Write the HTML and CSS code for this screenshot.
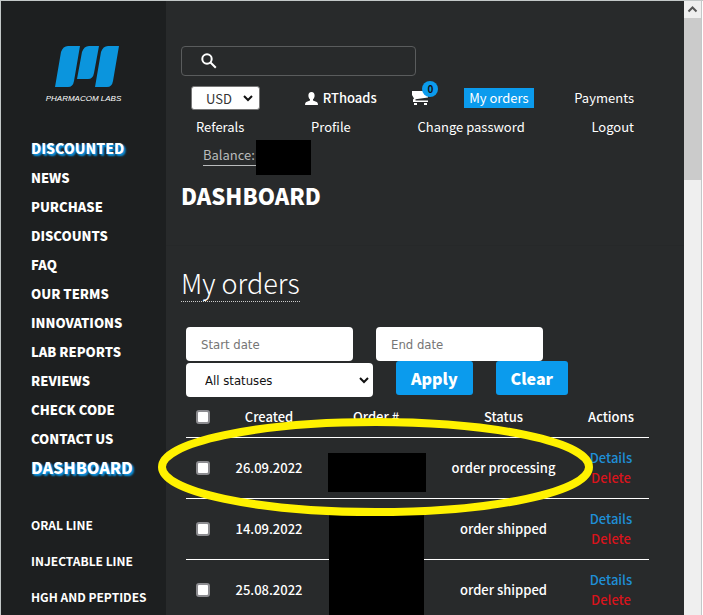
FILE: index.html
```html
<!DOCTYPE html>
<html lang="en">
<head>
  <meta charset="UTF-8">
  <meta name="viewport" content="width=device-width, initial-scale=1.0">
  <title>Dashboard - My orders</title>
  <link rel="stylesheet" href="styles.css">
</head>
<body>

<div class="window">
  <aside class="sidebar">
    <a class="logo" href="#">
      <svg width="64" height="42" viewBox="0 0 64 42" aria-hidden="true">
        <path d="M13 0H25L19 35Q18 41 13 41H0L6 6Q8 0 13 0Z"/>
        <path d="M34 0H44L39 27Q38 33 33 33H22L27 6Q29 0 34 0Z"/>
        <path d="M53 0H64L58 35Q57 41 52 41H40L46 6Q48 0 53 0Z"/>
      </svg>
      <span>PHARMACOM LABS</span>
    </a>
    <nav class="menu">
      <a class="glow" href="#">Discounted</a>
      <a href="#">News</a>
      <a href="#">Purchase</a>
      <a href="#">Discounts</a>
      <a href="#">FAQ</a>
      <a href="#">Our terms</a>
      <a href="#">Innovations</a>
      <a href="#">Lab reports</a>
      <a href="#">Reviews</a>
      <a href="#">Check code</a>
      <a href="#">Contact us</a>
      <a class="glow current" href="#">Dashboard</a>
    </nav>
    <nav class="lines">
      <a href="#">Oral line</a>
      <a href="#">Injectable line</a>
      <a href="#">HGH and peptides</a>
    </nav>
  </aside>

  <main class="content">
    <header class="top">
      <form class="search">
        <svg width="16" height="16" viewBox="0 0 16 16" aria-hidden="true">
          <circle cx="6" cy="6" r="4.7"/>
          <path d="M9.5 9.5L14.8 14.8"/>
        </svg>
        <input type="text" aria-label="Search">
      </form>

      <div class="user-row">
        <div class="currency">
          <select aria-label="Currency"><option>USD</option></select>
          <svg width="10" height="7" viewBox="0 0 10 7" aria-hidden="true"><path d="M1 1L5 5L9 1"/></svg>
        </div>
        <a class="user" href="#">
          <svg width="13" height="13" viewBox="0 0 13 13" aria-hidden="true">
            <path d="M6.500 0C8.600 0 9.600 1.500 9.600 3.500C9.600 5.200 8.900 6.600 8 7.300V8.500L11.800 10Q13 10.600 13 13H0Q0 10.600 1.200 10L5 8.500V7.300C4.100 6.600 3.400 5.200 3.400 3.500C3.400 1.500 4.400 0 6.500 0Z"/>
          </svg>
          RThoads
        </a>
        <a class="cart" href="#" aria-label="Cart">
          <svg width="18" height="16" viewBox="0 0 18 16" aria-hidden="true">
            <path d="M0 1H16V7.500L3.500 9.200V10.500H16V12H1V9.500L2 8.500L0 5Z"/>
            <rect x="2" y="13" width="3" height="2"/>
            <rect x="12" y="13" width="3" height="2"/>
          </svg>
          <span class="badge">0</span>
        </a>
        <a class="active" href="#">My orders</a>
        <a href="#">Payments</a>
      </div>
      <div class="user-row links">
        <a href="#">Referals</a>
        <a href="#">Profile</a>
        <a href="#">Change password</a>
        <a href="#">Logout</a>
      </div>
      <div class="balance">
        <span>Balance:</span>
        <div class="redacted amount"></div>
      </div>
      <h1>Dashboard</h1>
    </header>

    <section class="orders">
      <h2>My orders</h2>

      <form class="filters">
        <div class="dates">
          <input type="text" placeholder="Start date" aria-label="Start date">
          <input type="text" placeholder="End date" aria-label="End date">
        </div>
        <div class="actions">
          <div class="status">
            <select aria-label="Status"><option>All statuses</option></select>
            <svg width="10" height="7" viewBox="0 0 10 7" aria-hidden="true"><path d="M1 1L5 5L9 1"/></svg>
          </div>
          <button type="button">Apply</button>
          <button type="button">Clear</button>
        </div>
      </form>

      <div class="table-wrap">
        <table>
          <thead>
            <tr>
              <th class="col-check"><input type="checkbox" aria-label="Select all"></th>
              <th class="col-created">Created</th>
              <th class="col-order">Order #</th>
              <th class="col-status">Status</th>
              <th>Actions</th>
            </tr>
          </thead>
          <tbody>
            <tr>
              <td><input type="checkbox" aria-label="Select order of 26.09.2022"></td>
              <td>26.09.2022</td>
              <td><div class="redacted number"></div></td>
              <td>order processing</td>
              <td><a class="details" href="#">Details</a><a class="delete" href="#">Delete</a></td>
            </tr>
            <tr>
              <td><input type="checkbox" aria-label="Select order of 14.09.2022"></td>
              <td>14.09.2022</td>
              <td class="covered"><div class="redacted numbers"></div></td>
              <td>order shipped</td>
              <td><a class="details" href="#">Details</a><a class="delete" href="#">Delete</a></td>
            </tr>
            <tr>
              <td><input type="checkbox" aria-label="Select order of 25.08.2022"></td>
              <td>25.08.2022</td>
              <td></td>
              <td>order shipped</td>
              <td><a class="details" href="#">Details</a><a class="delete" href="#">Delete</a></td>
            </tr>
          </tbody>
        </table>
        <svg class="marker" viewBox="0 0 436 98" preserveAspectRatio="none" aria-hidden="true">
          <ellipse cx="218" cy="49" rx="214" ry="45"/>
        </svg>
      </div>
    </section>
  </main>

  <div class="scrollbar">
    <svg width="17" height="17" viewBox="0 0 17 17" aria-hidden="true"><path d="M4.500 10.500L8.500 6.500L12.500 10.500"/></svg>
    <div class="thumb"></div>
  </div>
</div>

</body>
</html>
```
FILE: styles.css
```css
* {
  box-sizing: border-box;
}
body {
  margin: 0;
  font-family: "Noto Sans CJK SC", "Open Sans", sans-serif;
  font-size: 13px;
  line-height: 20px;
  color: #fff;
  background-color: #282a2b;
}
a {
  color: inherit;
  text-decoration: none;
}
h1, h2 {
  margin: 0;
}
.window {
  display: flex;
  height: 100vh;
  overflow: hidden;
  border-top: 1px solid #c3c8c8;
  border-left: 1px solid #c3c8c8;
}

/* sidebar */
.sidebar {
  flex: 0 0 165px;
  padding-top: 45px;
  background-color: #1d1f20;
  font-weight: 900;
  text-transform: uppercase;
}
.logo {
  display: flex;
  flex-direction: column;
  align-items: center;
  gap: 5px;
  font: italic 8px/12px "Liberation Sans", Arial, sans-serif;
}
.logo svg {
  margin-left: 6px;
  fill: #0b95dd;
}
.menu, .lines {
  display: flex;
  flex-direction: column;
  padding-left: 30px;
}
.menu {
  margin-top: 29px;
  line-height: 29px;
}
.lines {
  margin-top: 25px;
  line-height: 36px;
  font-size: 12px;
  font-weight: 700;
}
.glow {
  font-size: 14px;
  text-shadow: 1px 1px 2px #0b9bed, 2px 2px 2px #0b84c9;
}
.menu .current {
  font-size: 16px;
}

/* header */
.content {
  flex: 1;
  min-width: 0;
}
.top {
  padding: 45px 45px 34px 15px;
  border-bottom: 1px solid #262829;
}
.search {
  display: flex;
  align-items: center;
  width: 235px;
  height: 30px;
  padding-left: 19px;
  border: 1px solid #5a5c5d;
  border-radius: 4px;
}
.search svg {
  fill: none;
  stroke: #fff;
  stroke-width: 2;
}
.search input {
  flex: 1;
  min-width: 0;
  border: none;
  outline: none;
  color: #fff;
  background: none;
}
.user-row {
  display: flex;
  justify-content: space-between;
  align-items: center;
  height: 24px;
  margin-top: 10px;
  padding-left: 10px;
}
.user-row > a {
  padding: 0 5px;
}
.user-row.links {
  margin-top: 5px;
}
.currency, .status {
  position: relative;
}
.currency svg, .status svg {
  position: absolute;
  top: 9px;
  right: 7px;
  fill: none;
  stroke: #111;
  stroke-width: 2;
  pointer-events: none;
}
.currency select {
  display: block;
  width: 69px;
  height: 24px;
  padding: 0 14px;
  appearance: none;
  border: 1px solid #777;
  border-radius: 3px;
  font-family: inherit;
  font-size: 13px;
  color: #333;
  background-color: #fff;
}
.user-row .user {
  display: flex;
  align-items: center;
  gap: 5px;
  padding: 0 0 0 9px;
  font-weight: 500;
}
.user svg, .cart svg {
  fill: #fff;
}
.user-row .cart {
  position: relative;
  width: 16px;
  height: 16px;
  padding: 0;
}
.cart svg {
  display: block;
}
.badge {
  position: absolute;
  left: 10px;
  bottom: 9px;
  width: 16px;
  height: 16px;
  border-radius: 50%;
  background-color: #0b9bed;
  font-size: 10px;
  font-weight: 700;
  line-height: 16px;
  text-align: center;
  color: #111;
}
.active {
  background-color: #0b9bed;
}
.balance {
  display: flex;
  height: 35px;
  margin-top: 1px;
  padding-left: 22px;
  color: #b9bbbc;
}
.balance span {
  align-self: flex-start;
  width: 53px;
  margin-top: 5px;
  border-bottom: 1px solid #b9bbbc;
}
.redacted {
  background-color: #000;
}
.amount {
  width: 55px;
}
h1 {
  margin-top: 4px;
  font-size: 22px;
  font-weight: 900;
  line-height: 32px;
  text-transform: uppercase;
}

/* orders */
.orders {
  padding: 18px 35px 0 20px;
}
h2 {
  display: inline-block;
  margin-left: -5px;
  border-bottom: 1px dotted #ccc;
  font-size: 27px;
  font-weight: 300;
  line-height: 37px;
}
.filters {
  margin-top: 25px;
  font-family: "DejaVu Sans Condensed", "DejaVu Sans", sans-serif;
}
.dates {
  display: flex;
  gap: 23px;
}
.dates input, .status select {
  width: 167px;
  height: 34px;
  padding: 0 15px;
  border: none;
  border-radius: 4px;
  font-family: inherit;
  font-size: 13px;
  color: #111;
  background-color: #fff;
}
.dates input::placeholder {
  color: #757575;
}
.actions {
  display: flex;
}
.status {
  margin-top: 2px;
}
.status select {
  display: block;
  width: 187px;
  padding: 0 19px;
  appearance: none;
}
.status svg {
  top: 14px;
  right: 4px;
}
.actions button {
  height: 34px;
  margin-left: 23px;
  padding: 0 15px;
  border: none;
  border-radius: 3px;
  font-family: "Noto Sans CJK SC", sans-serif;
  font-size: 16px;
  font-weight: 900;
  line-height: 34px;
  color: #fff;
  background-color: #0b9bed;
  cursor: pointer;
}
.table-wrap {
  position: relative;
}
table {
  width: 100%;
  table-layout: fixed;
  border-collapse: collapse;
}
th, td {
  height: 61px;
  padding: 0;
  border-bottom: 1px solid #fff;
  font-weight: 500;
  text-align: center;
}
th {
  height: 40px;
}
.col-check {
  width: 34px;
}
.col-created {
  width: 98px;
}
.col-order {
  width: 116px;
}
.col-status {
  width: 139px;
}
input[type="checkbox"] {
  display: block;
  width: 14px;
  height: 14px;
  margin: 0 auto;
  appearance: none;
  border: 2px solid #8c8c90;
  border-radius: 3px;
  background-color: #fff;
}
input[type="checkbox"]:checked {
  background-color: #0b9bed;
}
.details, .delete {
  display: block;
}
.details {
  color: #1f8fd6;
}
.delete {
  color: #d8141c;
}
.number {
  height: 39px;
  margin: 9px 8px 0 10px;
}
/* one block over the numbers of both shipped orders */
.covered {
  position: relative;
}
.numbers {
  position: absolute;
  top: 14px;
  left: 11px;
  right: 10px;
  height: 108px;
}
.marker {
  position: absolute;
  top: 21px;
  left: -28px;
  width: 435px;
  height: 98px;
  fill: none;
  stroke: #fff200;
  stroke-width: 8;
  pointer-events: none;
}

/* scrollbar */
.scrollbar {
  flex: 0 0 19px;
  border-right: 1px solid #fff;
  background-color: #efefef;
  box-shadow: inset -1px 0 #c3c8c8;
}
.scrollbar svg {
  display: block;
  fill: none;
  stroke: #555;
  stroke-width: 2;
}
.thumb {
  width: 17px;
  height: 162px;
  background-color: #cbcbcb;
}
```
